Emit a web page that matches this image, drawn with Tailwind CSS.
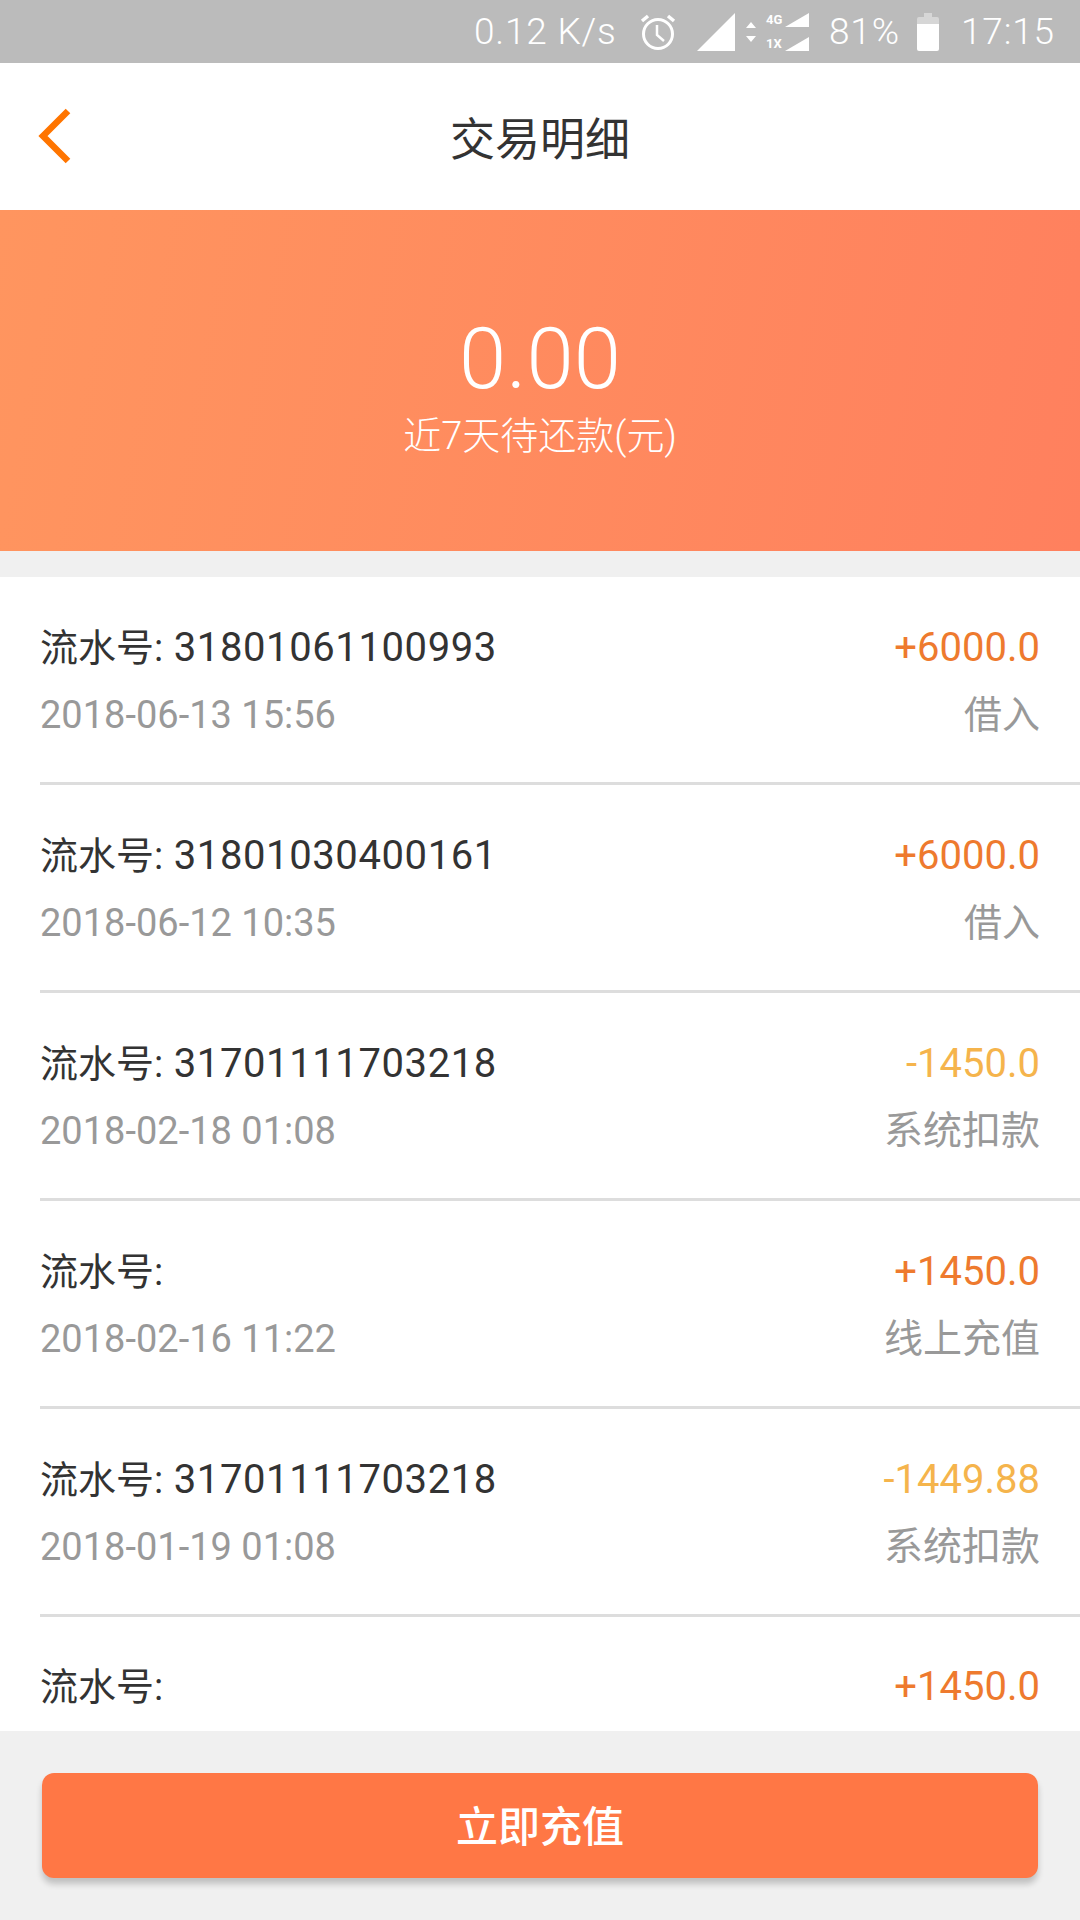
<!DOCTYPE html>
<html>
    <head>
        <meta charset="UTF-8">
        <meta name="viewport" content="width=device-width, initial-scale=1.0">
        <script src="https://cdn.jsdelivr.net/npm/@tailwindcss/browser@4"></script>
        <title>交易明细</title>
    </head>

    <body>
        <div class="flex flex-col h-[1920px] w-[1080px] overflow-hidden bg-[#f0f0f0] font-['Roboto','Noto_Sans_CJK_SC',sans-serif]">

            <!-- status bar -->
            <div class="flex items-center h-[63px] shrink-0 bg-[#bbbbbb] pl-[474px] text-white text-[37px] font-light">
                <span class="w-[143px] whitespace-nowrap tracking-[0.8px]">0.12 K/s</span>
                <svg class="ml-[22px]" width="38" height="38" viewBox="0 0 38 38" fill="none" stroke="white">
                    <circle cx="19" cy="21" r="14.500" stroke-width="3"/>
                    <path d="M18 12v10l7 6" stroke-width="2.500"/>
                    <path d="M3 8l6-5M35 8l-6-5" stroke-width="3.500"/>
                </svg>
                <svg class="ml-[20px]" width="38" height="38" viewBox="0 0 38 38" fill="white"><path d="M0 38L38 0V38Z"/></svg>
                <svg class="ml-[10px]" width="12" height="30" viewBox="0 0 12 30" fill="white"><path d="M6 5l5 6H1zM6 25l5-6H1z"/></svg>
                <div class="flex flex-col ml-[9px] w-[44px] h-[38px] justify-between font-bold">
                    <div class="flex items-end h-[14px]">
                        <span class="text-[13px] leading-[14px] w-[19px]">4G</span>
                        <svg width="24" height="14" viewBox="0 0 24 14" fill="white"><path d="M0 14L24 0V14Z"/></svg>
                    </div>
                    <div class="flex items-end h-[14px]">
                        <span class="text-[13px] leading-[14px] w-[19px]">1X</span>
                        <svg width="24" height="14" viewBox="0 0 24 14" fill="white"><path d="M0 14L24 0V14Z"/></svg>
                    </div>
                </div>
                <span class="ml-[19px] w-[75px] tracking-[0.8px]">81%</span>
                <svg class="ml-[13px]" width="22" height="38" viewBox="0 0 22 38">
                    <path d="M7 0h8v4h5a2 2 0 0 1 2 2v5H0V6a2 2 0 0 1 2-2h5z" fill="#d6d6d6"/>
                    <path d="M0 11h22v25a2 2 0 0 1-2 2H2a2 2 0 0 1-2-2z" fill="white"/>
                </svg>
                <span class="ml-[22px] tracking-[0.8px]">17:15</span>
            </div>

            <!-- nav -->
            <div class="relative flex items-center justify-center h-[147px] shrink-0 bg-white">
                <svg class="absolute left-[36px] top-[45px]" width="36" height="58" viewBox="0 0 36 58" fill="none">
                    <path d="M32 3L7 28L32 53" stroke="#ff7500" stroke-width="6.500"/>
                </svg>
                <h1 class="text-[45px] font-normal text-[#333333] relative top-[4px]">交易明细</h1>
            </div>

            <!-- banner -->
            <div class="flex flex-col items-center h-[341px] shrink-0 bg-linear-100 from-[#ff955f] to-[#ff805e] text-white">
                <div class="mt-[109px] text-[85px] leading-[80px] font-light">0.00</div>
                <div class="mt-[14px] text-[38px] leading-[46px] font-light">近7天待还款(元)</div>
            </div>

            <!-- list -->
            <div class="mt-[26px] flex-1 min-h-0 overflow-hidden bg-white pl-[40px]">
                <div class="flex flex-col h-[208px] justify-center pt-[4px] pr-[40px] border-b-[3px] border-[#dddddd]">
                    <div class="flex justify-between items-center h-[48px] text-[#333333] text-[40px] tracking-[0.6px]">
                        <span><span class="text-[38px] tracking-normal">流水号:</span> 31801061100993</span>
                        <span class="text-[#ee7a2e] tracking-normal">+6000.0</span>
                    </div>
                    <div class="flex justify-between items-center h-[48px] mt-[20px] text-[#999999] text-[38px]">
                        <span>2018-06-13 15:56</span>
                        <span>借入</span>
                    </div>
                </div>
                <div class="flex flex-col h-[208px] justify-center pt-[4px] pr-[40px] border-b-[3px] border-[#dddddd]">
                    <div class="flex justify-between items-center h-[48px] text-[#333333] text-[40px] tracking-[0.6px]">
                        <span><span class="text-[38px] tracking-normal">流水号:</span> 31801030400161</span>
                        <span class="text-[#ee7a2e] tracking-normal">+6000.0</span>
                    </div>
                    <div class="flex justify-between items-center h-[48px] mt-[20px] text-[#999999] text-[38px]">
                        <span>2018-06-12 10:35</span>
                        <span>借入</span>
                    </div>
                </div>
                <div class="flex flex-col h-[208px] justify-center pt-[4px] pr-[40px] border-b-[3px] border-[#dddddd]">
                    <div class="flex justify-between items-center h-[48px] text-[#333333] text-[40px] tracking-[0.6px]">
                        <span><span class="text-[38px] tracking-normal">流水号:</span> 31701111703218</span>
                        <span class="text-[#f5b44c] tracking-normal">-1450.0</span>
                    </div>
                    <div class="flex justify-between items-center h-[48px] mt-[20px] text-[#999999] text-[38px]">
                        <span>2018-02-18 01:08</span>
                        <span class="text-[39px]">系统扣款</span>
                    </div>
                </div>
                <div class="flex flex-col h-[208px] justify-center pt-[4px] pr-[40px] border-b-[3px] border-[#dddddd]">
                    <div class="flex justify-between items-center h-[48px] text-[#333333] text-[40px] tracking-[0.6px]">
                        <span><span class="text-[38px] tracking-normal">流水号:</span></span>
                        <span class="text-[#ee7a2e] tracking-normal">+1450.0</span>
                    </div>
                    <div class="flex justify-between items-center h-[48px] mt-[20px] text-[#999999] text-[38px]">
                        <span>2018-02-16 11:22</span>
                        <span class="text-[39px]">线上充值</span>
                    </div>
                </div>
                <div class="flex flex-col h-[208px] justify-center pt-[4px] pr-[40px] border-b-[3px] border-[#dddddd]">
                    <div class="flex justify-between items-center h-[48px] text-[#333333] text-[40px] tracking-[0.6px]">
                        <span><span class="text-[38px] tracking-normal">流水号:</span> 31701111703218</span>
                        <span class="text-[#f5b44c] tracking-normal">-1449.88</span>
                    </div>
                    <div class="flex justify-between items-center h-[48px] mt-[20px] text-[#999999] text-[38px]">
                        <span>2018-01-19 01:08</span>
                        <span class="text-[39px]">系统扣款</span>
                    </div>
                </div>
                <div class="pt-[46px] pr-[40px]">
                    <div class="flex justify-between items-center h-[48px] text-[#333333] text-[40px]">
                        <span class="text-[38px]">流水号:</span>
                        <span class="text-[#ee7a2e]">+1450.0</span>
                    </div>
                </div>
            </div>

            <!-- bottom bar -->
            <div class="h-[189px] shrink-0 bg-[#f0f0f0] px-[42px] pt-[42px]">
                <button class="flex items-center justify-center w-full h-[105px] rounded-[12px] bg-[#ff7745] text-white text-[42px] font-medium shadow-[0_6px_6px_rgba(0,0,0,0.2)]"><span class="relative top-[2px]">立即充值</span></button>
            </div>
        </div>
    </body>
</html>
